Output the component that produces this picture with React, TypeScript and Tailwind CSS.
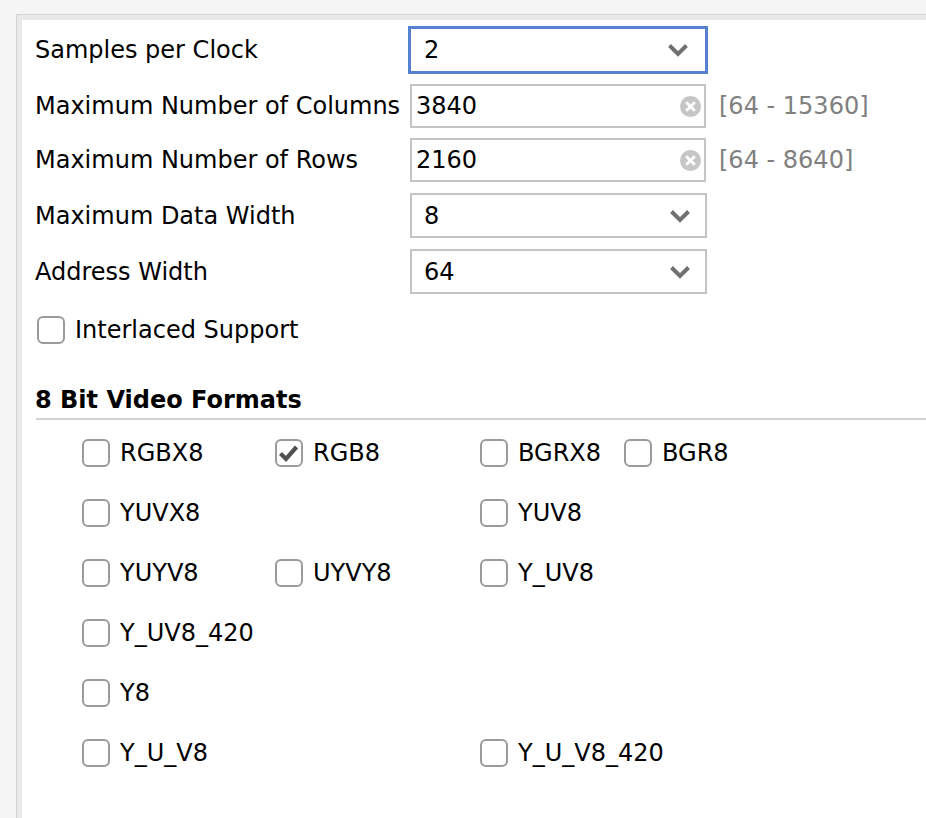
import React from "react";

function Chevron() {
  return (
    <svg width="22" height="14" viewBox="0 0 22 14" className="shrink-0">
      <path d="M2.5 2.5 L11 11 L19.5 2.5" fill="none" stroke="#707070" strokeWidth="4" />
    </svg>
  );
}

function ClearIcon() {
  return (
    <svg width="21" height="21" viewBox="0 0 21 21" className="shrink-0">
      <circle cx="10.5" cy="10.5" r="10.5" fill="#c6c6c6" />
      <path d="M6.2 6.2 L14.8 14.8 M14.8 6.2 L6.2 14.8" stroke="#fff" strokeWidth="2.8" />
    </svg>
  );
}

function Checkbox({ checked = false, label }: { checked?: boolean; label: string }) {
  return (
    <div className="flex items-center gap-[10px]">
      <div className="w-[28px] h-[28px] shrink-0 rounded-[6px] border-2 border-[#9b9b9b] bg-white">
        {checked && (
          <svg width="24" height="24" viewBox="0 0 24 24">
            <path d="M3.5 12.5 L9 18 L19.5 6" fill="none" stroke="#505050" strokeWidth="4.2" />
          </svg>
        )}
      </div>
      <span className="whitespace-nowrap">{label}</span>
    </div>
  );
}

function SelectBox({ value, focused = false }: { value: string; focused?: boolean }) {
  return (
    <div
      className={
        focused
          ? "-ml-[2px] w-[300px] h-[48px] border-[3px] border-[#5581d0] bg-white flex items-center justify-between pl-[13px] pr-[16px]"
          : "w-[297px] h-[45px] border-2 border-[#c4c4c4] bg-white flex items-center justify-between pl-[12px] pr-[14px]"
      }
    >
      <span>{value}</span>
      <Chevron />
    </div>
  );
}

function TextBox({ value }: { value: string }) {
  return (
    <div className="w-[296px] h-[44px] border-2 border-[#c4c4c4] bg-white flex items-center justify-between pl-[4px] pr-[3px]">
      <span>{value}</span>
      <ClearIcon />
    </div>
  );
}

const formats: { label: string; col: string; checked?: boolean }[][] = [
  [
    { label: "RGBX8", col: "col-start-1" },
    { label: "RGB8", col: "col-start-2", checked: true },
    { label: "BGRX8", col: "col-start-3" },
    { label: "BGR8", col: "col-start-4" },
  ],
  [
    { label: "YUVX8", col: "col-start-1" },
    { label: "YUV8", col: "col-start-3" },
  ],
  [
    { label: "YUYV8", col: "col-start-1" },
    { label: "UYVY8", col: "col-start-2" },
    { label: "Y_UV8", col: "col-start-3" },
  ],
  [{ label: "Y_UV8_420", col: "col-start-1" }],
  [{ label: "Y8", col: "col-start-1" }],
  [
    { label: "Y_U_V8", col: "col-start-1" },
    { label: "Y_U_V8_420", col: "col-start-3" },
  ],
];

export default function App() {
  return (
    <div
      className="h-[818px] overflow-hidden bg-[#f5f5f5] pt-[14px] pl-4 text-[24px] text-black leading-[28px]"
      style={{ fontFamily: '"DejaVu Sans", sans-serif' }}
    >
      {/* ── Outer frame ── */}
      <div className="h-full border-l border-t border-[#d2d2d2] bg-[#e9e9e9] pl-[5px] pt-[5px]">
        <div className="h-full bg-white pl-[13px] pt-[6px]">
          {/* ── Parameter rows ── */}
          <div className="flex items-center h-[48px]">
            <span className="w-[375px]">Samples per Clock</span>
            <SelectBox value="2" focused />
          </div>
          <div className="flex items-center h-[44px] mt-[10px]">
            <span className="w-[375px]">Maximum Number of Columns</span>
            <TextBox value="3840" />
            <span className="ml-[13px] text-[#808080]">[64 - 15360]</span>
          </div>
          <div className="flex items-center h-[44px] mt-[10px]">
            <span className="w-[375px]">Maximum Number of Rows</span>
            <TextBox value="2160" />
            <span className="ml-[13px] text-[#808080]">[64 - 8640]</span>
          </div>
          <div className="flex items-center h-[45px] mt-[11px]">
            <span className="w-[375px]">Maximum Data Width</span>
            <SelectBox value="8" />
          </div>
          <div className="flex items-center h-[45px] mt-[11px]">
            <span className="w-[375px]">Address Width</span>
            <SelectBox value="64" />
          </div>

          <div className="mt-[22px] ml-[2px] h-[28px] flex items-center">
            <Checkbox label="Interlaced Support" />
          </div>

          {/* ── Video formats ── */}
          <div className="mt-[42px] font-bold">8 Bit Video Formats</div>
          <div className="mt-[4px] ml-[1px] h-[2px] bg-[#d2d2d2]" />

          <div className="mt-[3px] pl-[47px] grid grid-cols-[193px_205px_144px_1fr]">
            {formats.map((row, i) =>
              row.map((f) => (
                <div
                  key={f.label}
                  className={`${f.col} h-[60px] flex items-center`}
                  style={{ gridRow: i + 1 }}
                >
                  <Checkbox label={f.label} checked={f.checked} />
                </div>
              ))
            )}
          </div>
        </div>
      </div>
    </div>
  );
}
